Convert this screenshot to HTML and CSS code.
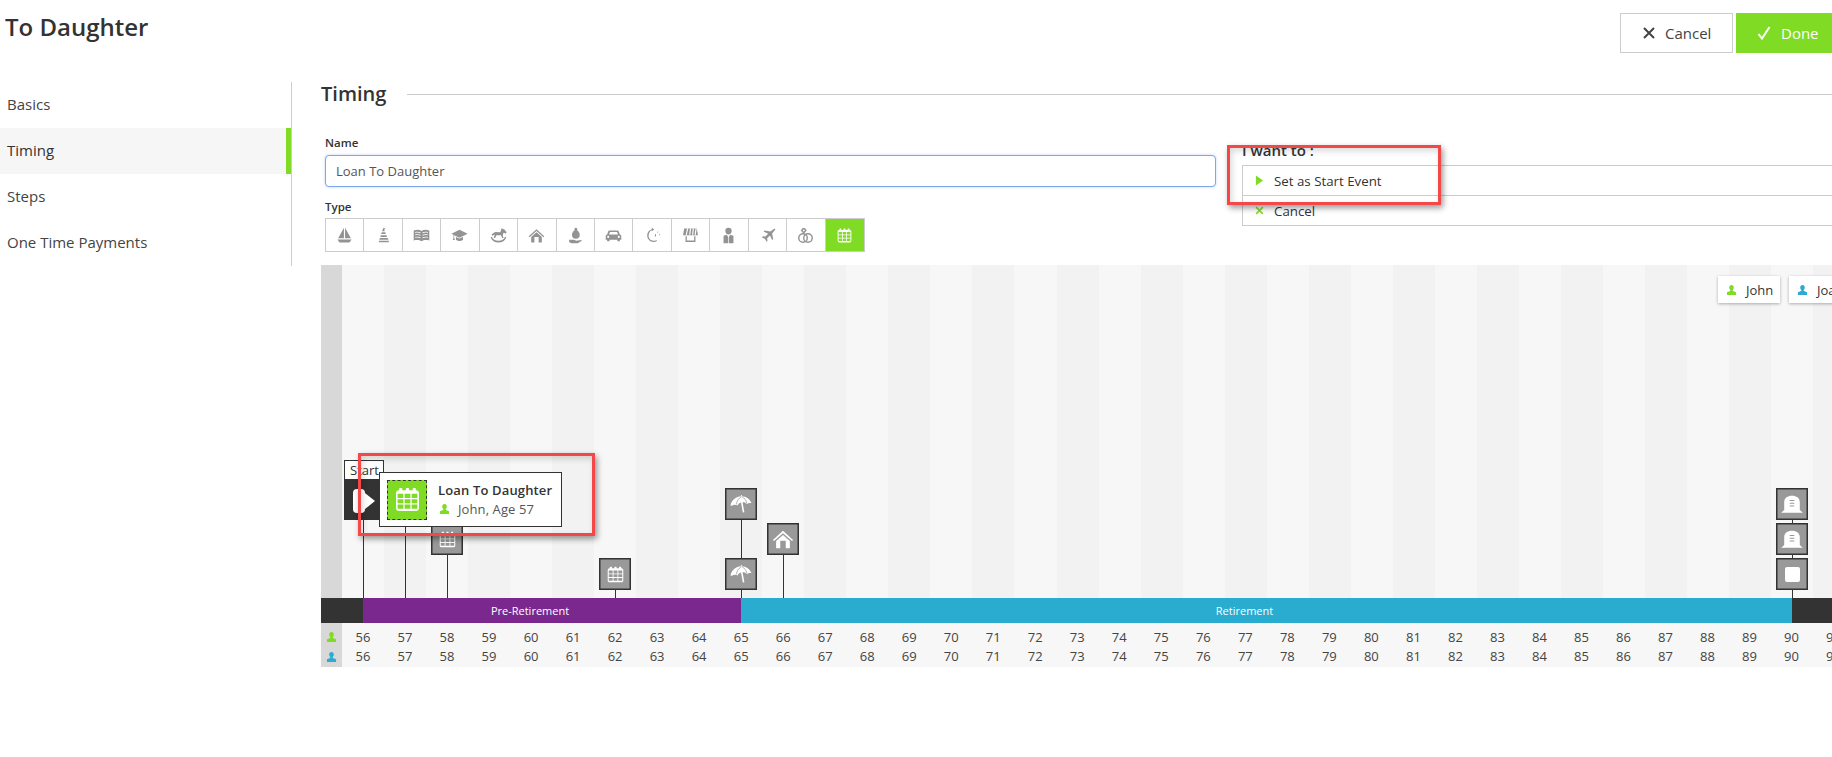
FILE: index.html
```html
<!DOCTYPE html>
<html lang="en">
  <head>
    <meta charset="UTF-8" />
    <title>To Daughter</title>
    <link rel="stylesheet" href="styles.css">
  </head>
  <body>
    <svg class="defs" aria-hidden="true">
      <symbol id="i-person" viewBox="0 0 24 24">
        <path d="M12 1c3.300 0 5 2.400 5 5.500 0 2.300-1 4.300-2.300 5.500v2.200c2.800.8 6.300 1.800 7.300 3.300V23H2v-5.500c1-1.500 4.500-2.500 7.300-3.300V12C8 10.800 7 8.800 7 6.500 7 3.400 8.700 1 12 1z" />
      </symbol>
      <symbol id="i-cal" viewBox="0 0 24 24">
        <path fill-rule="evenodd" d="M4 1.500C4 .7 7 .7 7 1.500V3h3.500V1.500c0-.8 3-.8 3 0V3H17V1.500c0-.8 3-.8 3 0V3c2 0 3 1 3 3v14c0 2-1 3-3 3H4c-2 0-3-1-3-3V6c0-2 1-3 3-3zM2.500 6.500v4H8v-4zm6.700 0v4h5.600v-4zm6.800 0v4h5.500v-4zM2.500 11.700v4H8v-4zm6.700 0v4h5.600v-4zm6.800 0v4h5.500v-4zM2.500 16.900v4H8v-4zm6.700 0v4h5.600v-4zm6.800 0v4h5.500v-4z" />
      </symbol>
      <symbol id="i-umbrella" viewBox="0 0 24 24">
        <path d="M.5 13.500C2 7.500 7 3.800 11.800 3.600l-.1-1.200 1.200-.1.200 1.300c4.500.3 8.700 3 10.400 7.700-1.800-.9-3.600-.6-5 .8-1.200-1.500-3-2.200-4.800-2l2 11-1.700.3-2-11c-1.800.5-3.100 1.700-3.700 3.200-1.800-1.200-4.700-1.100-6.100.2z" />
        <path fill="none" stroke="#999" stroke-width=".8" d="M12.500 4c-3 1.500-5 4.500-5.500 8.500M13 4c2.500 1.300 4.500 3.600 5.300 7" />
      </symbol>
      <symbol id="i-house" viewBox="0 0 24 24">
        <path fill-rule="evenodd" d="M12 3 1 13l1.200 1.300L12 5.600l9.800 8.700L23 13zM12 7.500l-7.500 6.700V22H9v-8h6v8h4.500v-7.800z" />
      </symbol>
      <symbol id="i-tomb" viewBox="0 0 24 24">
        <path fill-rule="evenodd" d="M3.500 18.500V10c0-4.700 3.800-7 8.500-7s8.500 2.300 8.500 7v8.500l3.300 3H.2zM9.500 7.500v1.200h5V7.500zm0 3v1.200h5v-1.200zm0 3v1.200h5v-1.200z" />
      </symbol>
    </svg>

    <!-- header -->
    <div class="top-bar">
      <h1 class="page-title">To Daughter</h1>
      <div class="top-actions">
        <button class="btn btn-cancel">
          <svg class="btn-icon" viewBox="0 0 12 12"><path d="M1 1l10 10m0-10L1 11" /></svg>
          Cancel
        </button>
        <button class="btn btn-done">
          <svg class="btn-icon" viewBox="0 0 14 14"><path d="M1.500 8l3.500 4.500L12.500 1" /></svg>
          Done
        </button>
      </div>
    </div>

    <div class="main">
      <!-- side menu -->
      <ul class="side-nav">
        <li>Basics</li>
        <li class="active">Timing</li>
        <li>Steps</li>
        <li>One Time Payments</li>
      </ul>

      <div class="content">
        <div class="section-head">
          <h2>Timing</h2>
          <span class="section-rule"></span>
        </div>

        <div class="form-row">
          <div class="form-left">
            <label class="field-label">Name</label>
            <input class="name-input" type="text" value="Loan To Daughter" />
            <label class="field-label type-label">Type</label>
            <div class="type-picker">
              <span class="type-cell"><svg viewBox="0 0 24 24"><path d="M11.200 1v15H3zM12.800 1 21 16h-8.200zM2 17.500h20L19 22H5z" /></svg></span>
              <span class="type-cell"><svg viewBox="0 0 24 24"><path d="M12 1l3 1.500-2 1 .8 2.500h-4zM9.500 7.500h5l.8 2.500h-6.600zM8.200 11.500h8l.8 2.500H7.500zM7 15.500h11l1 2.500H6zM5.500 19.500h14v2h-14z" /></svg></span>
              <span class="type-cell"><svg viewBox="0 0 24 24"><path fill-rule="evenodd" d="M1 5c4-1.500 8-1.500 11 .5 3-2 7-2 11-.5v14c-4-1-8-1-11 1-3-2-7-2-11-1zM3 7v1.300c2.500-.6 5-.5 7.500.5V7.500C8.500 6.500 5.500 6.400 3 7zm0 3.500v1.300c2.500-.6 5-.5 7.500.5V11c-2-1-5-1.100-7.500-.5zm0 3.500v1.300c2.500-.6 5-.5 7.500.5v-1.300c-2-1-5-1.100-7.500-.5zM21 7c-2.500-.6-5.500-.5-7.500.5v1.300c2.500-1 5-1.100 7.500-.5zm0 3.500c-2.500-.6-5.500-.5-7.500.5v1.300c2.500-1 5-1.100 7.500-.5zm0 3.500c-2.500-.6-5.500-.5-7.500.5v1.300c2.500-1 5-1.100 7.500-.5z" /></svg></span>
              <span class="type-cell"><svg viewBox="0 0 24 24"><path d="M12 4 .5 9.500l3 1.500v4.500l-1 3h3l-1-3.200V11.500L12 15l11.500-5.500zM7 14v4c3 2.500 7 2.500 10 0v-4l-5 2.400z" /></svg></span>
              <span class="type-cell"><svg viewBox="0 0 24 24"><path d="M16.500 1.500l1.500 1.200 2 .3 3.500 4.500-1.200 1.500-3.300-1-1 3.500 1 4h-1.800l-1.700-3.800H9l-1.700 3.800H5.500l1-5-3 2L2 10.500 5.500 8l2-1 7 .3zM1 14.500l1.700-.7C4 17.500 7.500 19.500 12 19.500s8-2 9.300-5.700l1.700.7C21.500 19.500 17.500 22 12 22S2.500 19.500 1 14.500z" /></svg></span>
              <span class="type-cell"><svg class="thin" viewBox="0 0 24 24"><use href="#i-house" /></svg></span>
              <span class="type-cell"><svg viewBox="0 0 24 24"><path d="M12.500 1a2 2 0 0 1 1.500 3.300c2.500 1.500 4 4.500 4 7 0 3-2 5.200-5.500 5.200S7 14.300 7 11.300c0-2.500 1.500-5.500 4-7A2 2 0 0 1 12.500 1zM3 18h7l3 1.500 7-1 1 1-6 3.500H6l-3-2z" /></svg></span>
              <span class="type-cell"><svg viewBox="0 0 24 24"><path fill-rule="evenodd" d="M6.500 5h11c1 0 1.700.6 2 1.500L21 10.500c1.200.3 2 1.300 2 2.500v5h-2v2h-3.500v-2h-11v2H3v-2H1v-5c0-1.200.8-2.200 2-2.500l1.500-4C4.800 5.600 5.500 5 6.500 5zM7 7l-1.300 3.500h12.600L17 7zM4.500 12.500a1.500 1.500 0 1 0 0 3 1.500 1.500 0 0 0 0-3zm15 0a1.500 1.500 0 1 0 0 3 1.500 1.500 0 0 0 0-3z" /></svg></span>
              <span class="type-cell"><svg viewBox="0 0 24 24"><path d="M11 1l3.500 2.500L11 6V4.500C8 5.500 6.500 9 6.500 12.500c0 4 3 7 7 7 1.500 0 3-.5 4-1.300l.8 1.500c-1.300 1-3 1.600-4.800 1.600-5 0-9-4-9-9.500 0-4.300 2.500-7.600 6.500-8.800zM15.500 10h1.300v3l-1 .8-.8-.8.500-.5zM19 6.500h1V8h-1zM21.500 10h1v1.500h-1z" /></svg></span>
              <span class="type-cell"><svg viewBox="0 0 24 24"><path d="M3 2h18l1.500 9.500h-21zM5 21V13h1.800v6.200h10.400V13H19v8z" /><path class="awning" d="M8 2 6 11M12 2l-1 9M16 2l-1 9M20 2l-1.500 9" /></svg></span>
              <span class="type-cell"><svg viewBox="0 0 24 24"><path d="M12 1a4.500 4.500 0 0 1 4.500 4.500c0 2.500-2 5-4.500 5s-4.500-2.500-4.500-5A4.500 4.500 0 0 1 12 1zM5 12.500 9.500 11l2 3v9H5zM19 12.500 14.500 11l-2 3v9H19z" /></svg></span>
              <span class="type-cell"><svg viewBox="0 0 24 24"><path d="M21.500 2.500c1-.5 1.800.3 1.300 1.300L18.500 9l1.500 8-1.500 1.500-3-6.500-4 4 .5 3.500L11 21l-2.500-4L4 14.500 5.500 13l3.500.5 4-4L6.500 6.500 8 5l8 1.500z" /></svg></span>
              <span class="type-cell"><svg class="rings" viewBox="0 0 24 24"><circle cx="8.500" cy="15.500" r="6" /><circle cx="15.500" cy="15.500" r="6" /><path d="M6.500 5l2-2.500h2L12.500 5l-3 3z" /></svg></span>
              <span class="type-cell active"><svg viewBox="0 0 24 24"><use href="#i-cal" /></svg></span>
            </div>
          </div>

          <div class="form-right">
            <div class="want-title">I want to :</div>
            <div class="action-row">
              <svg class="action-icon" viewBox="0 0 10 12"><path d="M1 .5l8 5.500-8 5.500z" /></svg>
              Set as Start Event
            </div>
            <div class="action-row">
              <svg class="action-icon action-x" viewBox="0 0 12 12"><path d="M1.500 1.500l9 9m0-9l-9 9" /></svg>
              Cancel
            </div>
          </div>
        </div>

        <!-- timeline -->
        <div class="timeline">
          <div class="plot">
            <div class="plot-gutter"></div>

            <div class="chip chip-john"><svg class="person green"><use href="#i-person" /></svg>John</div>
            <div class="chip chip-joan"><svg class="person blue"><use href="#i-person" /></svg>Joan</div>

            <span class="stem stem-start"></span>
            <span class="stem stem-loan"></span>
            <span class="stem stem-58"></span>
            <span class="stem stem-62"></span>
            <span class="stem stem-65"></span>
            <span class="stem stem-66"></span>
            <span class="stem stem-90"></span>

            <div class="start-label">Start</div>
            <div class="start-box">
              <span class="play-rect"></span>
              <svg class="play-tri" viewBox="0 0 10 16"><path d="M0 0l10 8-10 8z" /></svg>
            </div>

            <div class="marker m-58 lvl-2"><svg><use href="#i-cal" /></svg></div>
            <div class="marker m-62 lvl-1"><svg><use href="#i-cal" /></svg></div>
            <div class="marker m-65 lvl-1"><svg class="big"><use href="#i-umbrella" /></svg></div>
            <div class="marker m-65 lvl-3"><svg class="big"><use href="#i-umbrella" /></svg></div>
            <div class="marker m-66 lvl-2"><svg class="big"><use href="#i-house" /></svg></div>
            <div class="marker m-90 lvl-1"><span class="square"></span></div>
            <div class="marker m-90 lvl-2"><svg class="big"><use href="#i-tomb" /></svg></div>
            <div class="marker m-90 lvl-3"><svg class="big"><use href="#i-tomb" /></svg></div>

            <div class="event-tip">
              <div class="tip-icon"><svg><use href="#i-cal" /></svg></div>
              <div class="tip-text">
                <div class="tip-name">Loan To Daughter</div>
                <div class="tip-sub"><svg class="person green"><use href="#i-person" /></svg>John, Age 57</div>
              </div>
            </div>
          </div>

          <div class="band">
            <div class="band-end band-left"></div>
            <div class="band-part pre">Pre-Retirement</div>
            <div class="band-part ret">Retirement</div>
            <div class="band-end band-right"></div>
          </div>

          <div class="age-row">
            <div class="age-key"><svg class="person green"><use href="#i-person" /></svg></div>
            <span>56</span><span>57</span><span>58</span><span>59</span><span>60</span><span>61</span><span>62</span><span>63</span><span>64</span><span>65</span><span>66</span><span>67</span><span>68</span><span>69</span><span>70</span><span>71</span><span>72</span><span>73</span><span>74</span><span>75</span><span>76</span><span>77</span><span>78</span><span>79</span><span>80</span><span>81</span><span>82</span><span>83</span><span>84</span><span>85</span><span>86</span><span>87</span><span>88</span><span>89</span><span>90</span><span>91</span>
          </div>
          <div class="age-row">
            <div class="age-key"><svg class="person blue"><use href="#i-person" /></svg></div>
            <span>56</span><span>57</span><span>58</span><span>59</span><span>60</span><span>61</span><span>62</span><span>63</span><span>64</span><span>65</span><span>66</span><span>67</span><span>68</span><span>69</span><span>70</span><span>71</span><span>72</span><span>73</span><span>74</span><span>75</span><span>76</span><span>77</span><span>78</span><span>79</span><span>80</span><span>81</span><span>82</span><span>83</span><span>84</span><span>85</span><span>86</span><span>87</span><span>88</span><span>89</span><span>90</span><span>91</span>
          </div>
        </div>
      </div>
    </div>

    <!-- annotations drawn over the screenshot -->
    <div class="callout callout-action"></div>
    <div class="callout callout-event"></div>
  </body>
</html>
```

FILE: styles.css
```css
* {
  box-sizing: border-box;
  margin: 0;
  padding: 0;
}

html,
body {
  height: 100%;
  overflow: hidden;
  background: #fff;
  color: #333;
  font-family: "Open Sans", sans-serif;
}

.defs {
  position: absolute;
  width: 0;
  height: 0;
}

/* header */
.top-bar {
  height: 82px;
  display: flex;
  justify-content: space-between;
  align-items: flex-start;
}

.page-title {
  margin: 10px 0 0 5px;
  font-size: 24px;
  line-height: 33px;
  font-weight: 600;
}

.top-actions {
  display: flex;
  gap: 3px;
  margin-top: 13px;
}

.btn {
  height: 40px;
  display: flex;
  align-items: center;
  gap: 10px;
  font-family: inherit;
  font-size: 15px;
  cursor: pointer;
}

.btn-icon {
  width: 12px;
  height: 12px;
  fill: none;
  stroke: currentColor;
  stroke-width: 2;
}

.btn-cancel {
  width: 113px;
  padding-left: 22px;
  background: #fff;
  border: 1px solid #ccc;
  color: #444;
}

.btn-done {
  width: 96px;
  padding-left: 21px;
  background: #80db24;
  border: none;
  color: #fff;
}

.btn-done .btn-icon {
  width: 14px;
  height: 14px;
}

/* main area */
.main {
  display: flex;
}

.side-nav {
  width: 292px;
  height: 184px;
  flex: none;
  list-style: none;
  border-right: 1px solid #ccc;
}

.side-nav li {
  height: 46px;
  line-height: 44px;
  padding-left: 7px;
  font-size: 15px;
  color: #444;
}

.side-nav li.active {
  background: #f6f6f6;
  border-right: 5px solid #80db24;
  color: #333;
}

.content {
  flex: 1;
  min-width: 0;
  padding: 0 0 0 29px;
}

.section-head {
  display: flex;
  align-items: center;
  height: 24px;
  gap: 21px;
}

.section-head h2 {
  font-size: 20px;
  line-height: 24px;
  font-weight: 600;
}

.section-rule {
  flex: 1;
  height: 1px;
  background: #ccc;
}

.form-row {
  display: flex;
  height: 159px;
  padding: 29px 0 0 4px;
}

.form-left {
  width: 891px;
  flex: none;
}

.field-label {
  display: block;
  font-size: 11.500px;
  line-height: 16px;
  font-weight: 600;
  margin-bottom: 4px;
}

.name-input {
  display: block;
  width: 100%;
  height: 32px;
  padding: 0 10px;
  border: 1px solid #7ea6ec;
  border-radius: 4px;
  box-shadow: 0 0 3px rgba(82, 130, 235, 0.35);
  outline: none;
  color: #555;
  font-family: inherit;
  font-size: 13px;
}

.type-label {
  margin-top: 12px;
  margin-bottom: 3px;
}

.type-picker {
  display: grid;
  grid-template-columns: repeat(14, 1fr);
  width: 540px;
  height: 34px;
  border: 1px solid #ccc;
}

.type-cell {
  display: flex;
  align-items: center;
  justify-content: center;
  border-right: 1px solid #ccc;
}

.type-cell:last-child {
  border-right: none;
}

.type-cell svg {
  width: 17px;
  height: 17px;
  fill: #939393;
}

.type-cell .awning {
  fill: none;
  stroke: #fff;
  stroke-width: 1.600;
}

.type-cell .rings {
  fill: none;
  stroke: #939393;
  stroke-width: 2;
}

.type-cell.active {
  background: #80db24;
}

.type-cell.active svg {
  width: 15px;
  height: 15px;
  fill: #fff;
}

.form-right {
  flex: none;
  width: 600px;
  margin-left: 26px;
}

.want-title {
  height: 20px;
  margin: 5px 0;
  font-size: 15px;
  line-height: 20px;
  font-weight: 600;
}

.action-row {
  display: flex;
  align-items: center;
  gap: 10px;
  height: 31px;
  margin-bottom: -1px;
  padding-left: 12px;
  border: 1px solid #ccc;
  font-size: 13.300px;
  color: #333;
}

.action-icon {
  width: 9px;
  height: 11px;
  fill: #80db24;
}

.action-x {
  fill: none;
  stroke: #80db24;
  stroke-width: 2;
}

/* timeline */
.timeline {
  overflow: hidden;
}

.plot {
  position: relative;
  height: 333px;
  overflow: hidden;
  background: repeating-linear-gradient(90deg, #f7f7f7 0 42.030px, #f2f2f2 42.030px 84.060px);
  background-position: 21px 0;
  background-size: 100% 100%;
}

.plot-gutter {
  position: absolute;
  left: 0;
  top: 0;
  bottom: 0;
  width: 21px;
  background: #d8d8d8;
}

.chip {
  position: absolute;
  top: 11px;
  display: flex;
  align-items: center;
  gap: 9px;
  height: 27px;
  padding-left: 8px;
  background: #fff;
  box-shadow: 0 1px 3px rgba(0, 0, 0, 0.3);
  font-size: 13px;
}

.chip-john {
  left: 1397px;
  width: 62px;
}

.chip-joan {
  left: 1468px;
  width: 70px;
}

.person {
  width: 11px;
  height: 12px;
  flex: none;
}

.green {
  fill: #80db24;
}

.blue {
  fill: #2aabd0;
}

/* markers sit on the age axis: 21px gutter + 42px per year, from the bottom of the plot */
.stem {
  position: absolute;
  bottom: 0;
  width: 1px;
  background: #333;
}

.stem-start { left: 42px; height: 78px; }
.stem-loan { left: 84px; height: 72px; }
.stem-58 { left: 126px; height: 43px; }
.stem-62 { left: 294px; height: 8px; }
.stem-65 { left: 420px; height: 78px; }
.stem-66 { left: 462px; height: 43px; }
.stem-90 { left: 1471px; height: 78px; }

.marker {
  position: absolute;
  width: 32px;
  height: 32px;
  display: flex;
  align-items: center;
  justify-content: center;
  background: #999;
  border: 1px solid #333;
  box-shadow: inset 0 0 0 0.500px #333;
}

.marker svg {
  width: 17px;
  height: 17px;
  fill: #fff;
}

.marker svg.big {
  width: 22px;
  height: 22px;
}

.marker .square {
  width: 15px;
  height: 15px;
  background: #fff;
  border-radius: 2px;
}

.lvl-1 { bottom: 8px; }
.lvl-2 { bottom: 43px; }
.lvl-3 { bottom: 78px; }

.m-58 { left: 110px; }
.m-62 { left: 278px; }
.m-65 { left: 404px; }
.m-66 { left: 446px; }
.m-90 { left: 1455px; }

.start-label {
  position: absolute;
  left: 23px;
  bottom: 118px;
  width: 40px;
  height: 20px;
  padding-left: 5px;
  background: #fff;
  border: 1px solid #333;
  font-size: 13px;
  line-height: 19px;
}

.start-box {
  position: absolute;
  left: 23px;
  bottom: 78px;
  width: 40px;
  height: 40px;
  background: #333;
}

.play-rect {
  position: absolute;
  left: 9px;
  top: 9px;
  width: 12px;
  height: 24px;
  background: #fff;
  border-radius: 4px;
}

.play-tri {
  position: absolute;
  left: 19px;
  top: 9px;
  width: 12px;
  height: 24px;
  fill: #fff;
}

.event-tip {
  position: absolute;
  left: 58px;
  bottom: 71px;
  width: 183px;
  height: 55px;
  display: flex;
  align-items: center;
  gap: 11px;
  padding-left: 7px;
  background: #fff;
  border: 1px solid #333;
}

.tip-icon {
  width: 40px;
  height: 40px;
  display: flex;
  align-items: center;
  justify-content: center;
  background: #80db24;
  border: 1px dashed #333;
}

.tip-icon svg {
  width: 25px;
  height: 25px;
  fill: #fff;
}

.tip-name {
  font-size: 13px;
  line-height: 19px;
  font-weight: 600;
  letter-spacing: 0.150px;
}

.tip-sub {
  display: flex;
  align-items: center;
  gap: 8px;
  padding-left: 1px;
  font-size: 13px;
  line-height: 19px;
  letter-spacing: 0.100px;
  color: #555;
}

.band {
  display: flex;
  height: 25px;
  color: #fff;
  font-size: 11px;
  line-height: 25px;
  text-align: center;
}

.band-end {
  flex: none;
  background: #333;
}

.band-left {
  width: 42px;
}

.band-right {
  flex: 1;
}

.band-part {
  flex: none;
  padding-right: 44px;
}

.pre {
  width: 378px;
  background: #7a288d;
}

.ret {
  width: 1051px;
  background: #2aabd0;
}

.age-row {
  display: flex;
  width: 1560px;
  height: 24px;
  padding-top: 4px;
  background: #f7f7f7;
  font-size: 13px;
  line-height: 20px;
  color: #444;
}

.age-row + .age-row {
  height: 20px;
  padding-top: 0;
  line-height: 18px;
}

.age-row span {
  flex: 0 0 42.030px;
  text-align: center;
}

.age-key {
  flex: 0 0 21px;
  display: flex;
  align-items: center;
  justify-content: center;
  background: #d8d8d8;
  margin-top: -4px;
  padding-top: 4px;
}

.age-row + .age-row .age-key {
  margin-top: 0;
  padding-top: 0;
}

/* red annotation boxes */
.callout {
  position: absolute;
  border: 3px solid #f44848;
  box-shadow: 2px 3px 6px rgba(0, 0, 0, 0.4), inset 2px 3px 6px rgba(0, 0, 0, 0.15);
  pointer-events: none;
}

.callout-action {
  left: 1227px;
  top: 145px;
  width: 214px;
  height: 60px;
}

.callout-event {
  left: 358px;
  top: 453px;
  width: 237px;
  height: 83px;
}
```
